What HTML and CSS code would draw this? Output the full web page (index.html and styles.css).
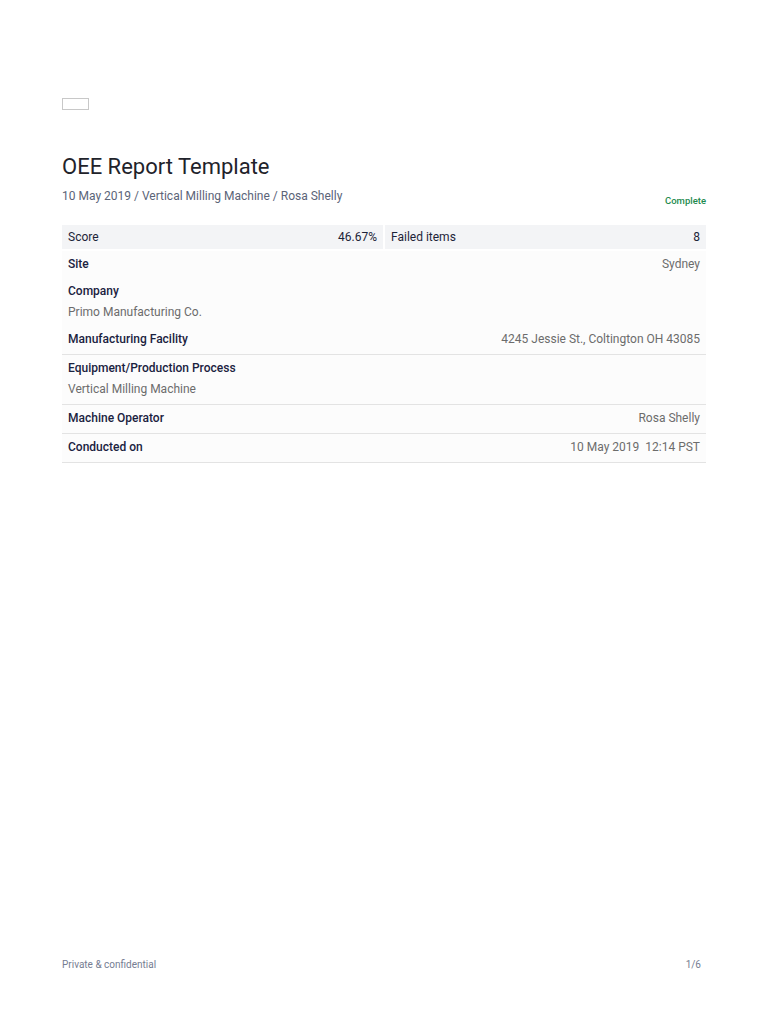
FILE: index.html
```html
<!DOCTYPE html>
<html lang="en">
<head>
<meta charset="utf-8">
<title>OEE Report Template</title>
<link rel="stylesheet" href="styles.css">
</head>
<body>
<div class="page">
  <div class="logo"></div>
  <h1 class="title">OEE Report Template</h1>
  <div class="subline">
    <span class="crumbs">10 May 2019 / Vertical Milling Machine / Rosa Shelly</span>
    <span class="status">Complete</span>
  </div>
  <div class="scorebar">
    <div class="cell"><span>Score</span><span>46.67%</span></div>
    <div class="cell"><span>Failed items</span><span>8</span></div>
  </div>
  <div class="rows">
    <div class="row inline"><span class="label">Site</span><span class="value">Sydney</span></div>
    <div class="row stacked"><span class="label">Company</span><span class="value">Primo Manufacturing Co.</span></div>
    <div class="row inline bordered"><span class="label">Manufacturing Facility</span><span class="value">4245 Jessie St., Coltington OH 43085</span></div>
    <div class="row stacked bordered"><span class="label">Equipment/Production Process</span><span class="value">Vertical Milling Machine</span></div>
    <div class="row inline bordered"><span class="label">Machine Operator</span><span class="value">Rosa Shelly</span></div>
    <div class="row inline bordered"><span class="label">Conducted on</span><span class="value">10 May 2019&nbsp;&nbsp;12:14 PST</span></div>
  </div>
  <div class="spacer"></div>
  <div class="footer">
    <span>Private &amp; confidential</span>
    <span>1/6</span>
  </div>
</div>
</body>
</html>
```

FILE: styles.css
```css
html, body {
  margin: 0;
  padding: 0;
  background: #ffffff;
}
body {
  font-family: Roboto, "Liberation Sans", sans-serif;
  color: #1d2438;
}
.page {
  width: 644px;
  height: 1024px;
  box-sizing: border-box;
  margin: 0 0 0 62px;
  padding-top: 98px;
  display: flex;
  flex-direction: column;
}
.logo {
  width: 25px;
  height: 10px;
  border: 1px solid #c8c8c8;
}
.title {
  margin: 43px 0 0;
  font-size: 22px;
  line-height: 28px;
  font-weight: 400;
  color: #1f232b;
}
.subline {
  display: flex;
  justify-content: space-between;
  align-items: flex-start;
  margin-top: 7px;
}
.crumbs {
  font-size: 12px;
  line-height: 16px;
  color: #5b6478;
}
.status {
  font-size: 9.5px;
  line-height: 12px;
  margin-top: 7px;
  color: #1e8a4e;
  font-weight: 500;
}
.scorebar {
  display: grid;
  grid-template-columns: 321px 1fr;
  gap: 2px;
  margin-top: 18px;
}
.scorebar .cell {
  display: flex;
  justify-content: space-between;
  background: #f3f4f6;
  padding: 5px 6px 5px 6px;
  font-size: 12px;
  line-height: 14px;
  color: #1d2438;
}
.rows {
  margin-top: 2px;
  background: #fcfcfc;
}
.row {
  padding: 6px 6px 7px;
  font-size: 12px;
  line-height: 14px;
}
.row.inline {
  display: flex;
  justify-content: space-between;
}
.row.stacked {
  display: flex;
  flex-direction: column;
  gap: 7px;
}
.row.bordered {
  padding-bottom: 8px;
  border-bottom: 1px solid #e3e3e3;
}
.label {
  font-weight: 500;
  color: #1a2240;
}
.value {
  color: #6c6c6c;
}
.spacer {
  flex: 1;
}
.footer {
  display: flex;
  justify-content: space-between;
  padding: 0 5px 53px 0;
  font-size: 10px;
  line-height: 12px;
  color: #767d92;
}
```
